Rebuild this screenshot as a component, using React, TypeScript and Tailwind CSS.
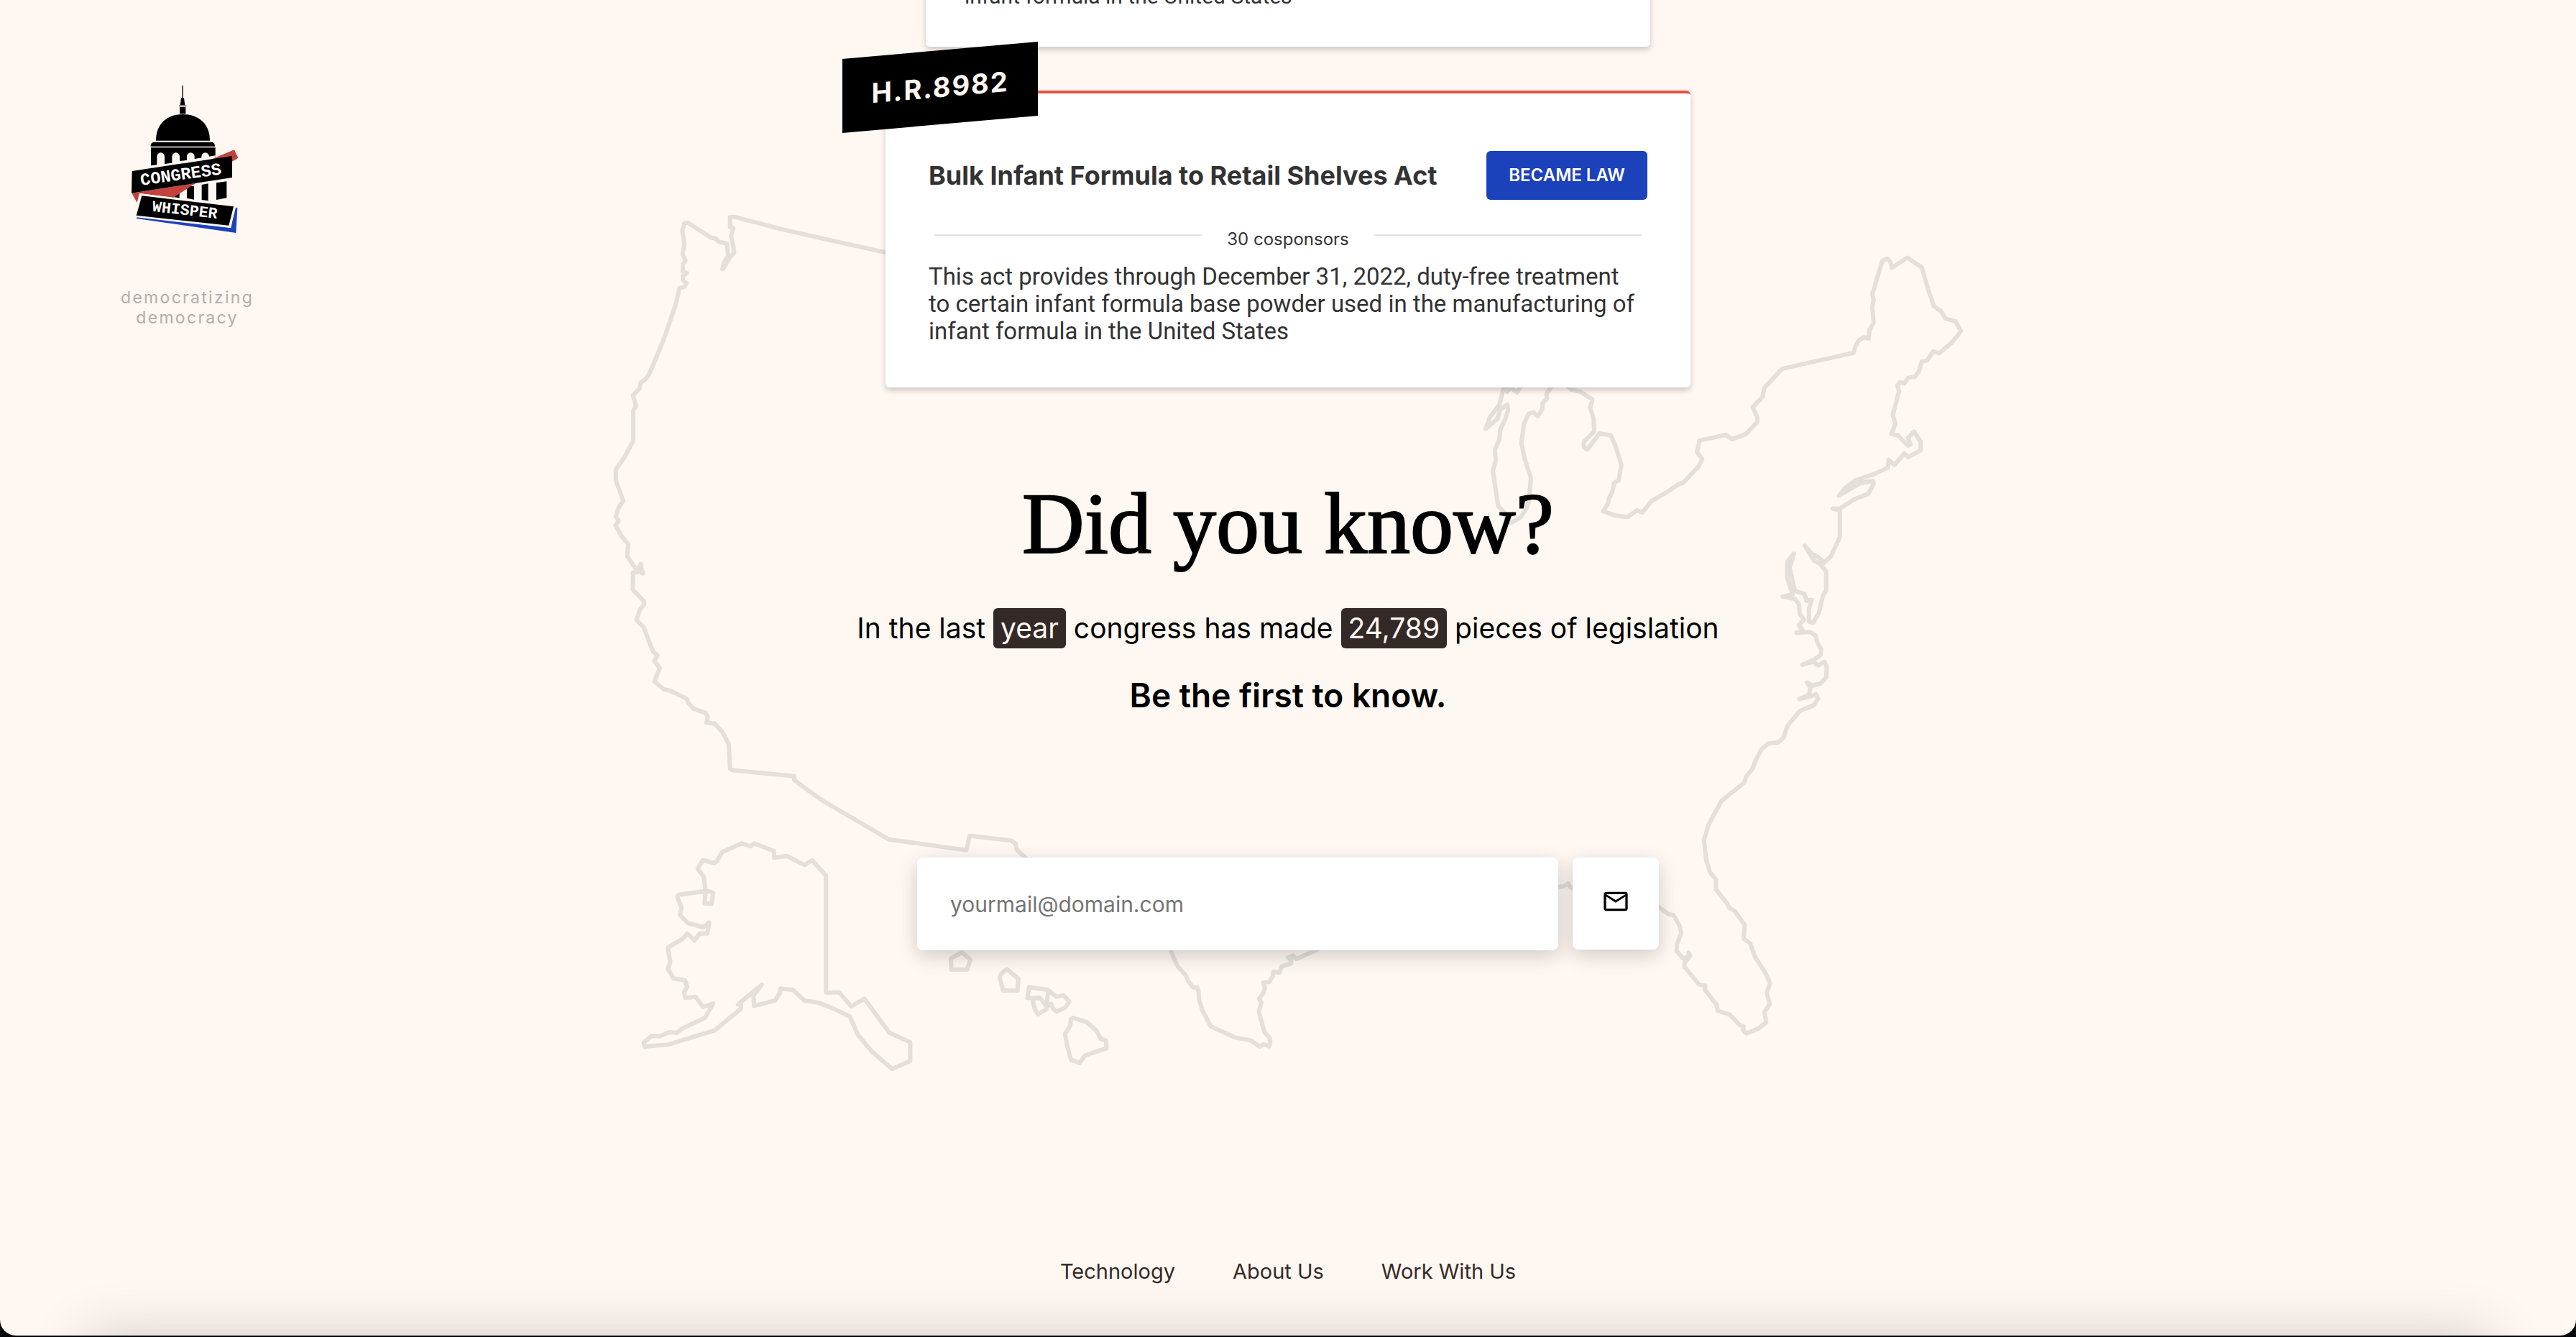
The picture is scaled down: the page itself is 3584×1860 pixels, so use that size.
import React from "react";
import { MdOutlineEmail } from "react-icons/md";

function Logo() {
  return (
    <svg viewBox="120 80 462 630" className="h-[210px] w-[154px]" role="img" aria-label="Congress Whisper">
      <path d="M340 86h4v52h-4z" />
      <path d="M336 138h12l4 30h-20z" />
      <path d="M327 168h31v6h-31z" fill="#7a7672" />
      <path d="M330 176h25v28h-25z" />
      <path d="M231 316c0-72 48-110 112-110s113 38 113 110z" />
      <path d="M209 340c0-12 6-18 14-18h240c8 0 14 6 14 18z" />
      <path d="M210 345h269v45L210 420z" />
      <g fill="#fff7f1">
        <path d="M235 420v-38a16 16 0 0 1 32 0v38z" />
        <path d="M298 412v-30a16 16 0 0 1 32 0v30z" />
        <path d="M360 404v-22a16 16 0 0 1 32 0v22z" />
        <path d="M421 396v-14a16 16 0 0 1 32 0v14z" />
      </g>
      <path d="M209 421 300 409 330 402 479 378v30L209 440z" fill="#fff7f1" />
      <path d="M483 492l43-6v69l-43 8z" />
      <path d="M422 500l27-5v72l-27-4z" />
      <path d="M360 506h30v56l-30-6z" />
      <path d="M300 515h29v40l-29-4z" />
      <path d="M466 392l92-38 16 34-26 16z" fill="#c1433b" />
      <path d="M130 535l268-42-94 60-142-17-10 39z" fill="#c1433b" />
      <path d="M131 443 549 380v90L129 535z" />
      <path d="M150 636l392 44 22-84 7-1-6 106-415-60z" fill="#1c42bb" />
      <path d="M162 536 563 588 544 680 148 632z" fill="#fff7f1" />
      <path d="M172 546 555 591 535 670 149 628z" />
      <g fill="#fff" fontFamily="'Liberation Mono', monospace" fontWeight="700">
        <text x="169" y="503" fontSize="71" transform="rotate(-8 169 503)">CONGRESS</text>
        <text x="214" y="610" fontSize="65" transform="rotate(6.5 214 610)">WHISPER</text>
      </g>
    </svg>
  );
}

function UnitedStatesMap() {
  return (
    <svg
      viewBox="847 290 1890 1210"
      aria-hidden="true"
      className="absolute left-1/2 top-[290px] w-[1890px] -translate-x-1/2"
      fill="none"
      stroke="#e4dfda"
      strokeWidth="6"
      strokeLinejoin="round"
      strokeLinecap="round"
    >
      {/* Northern border, Pacific coast */}
      <g transform="matrix(0.35714 0 0 0.54846 830 280)">
        <path
          vectorEffect="non-scaling-stroke"
          d="M1140 132 940 103 715 70 540 40 520 40 520 65 533 68 524 88 532 112 536 130 520 142 495 170 490 172 497 155 512 138 508 108 475 102 462 94 445 92 355 54 342 56 334 75 342 108 335 135 347 150 336 160 336 178 352 182 336 190 336 200 350 208 342 217 322 221 318 235 308 262 262 350 225 408 205 438 190 452 172 460 168 474 142 492 153 518 143 532 143 608 135 617 110 648 75 680 75 708 104 760 85 778 75 800 86 811 74 822 95 847 123 870 119 900 150 930 165 930 172 920 180 944 168 940 142 942 141 985 185 1015 186 1022 170 1035 155 1062 183 1080 220 1142 237 1152 225 1165 246 1184 225 1218 262 1238 290 1242 352 1262 358 1273 378 1287 425 1298 433 1308 428 1322 460 1325 492 1348 515 1377 520 1440 530 1443 770 1458 770 1468 790 1478"
        />
      </g>
      {/* Mexican border, Alaska, Hawaii */}
      <g transform="matrix(0.45918 0 0 0.33333 860 1040)">
        <path vectorEffect="non-scaling-stroke" d="M549 152 620 222 820 383 1055 428 1065 368 1190 388 1205 402 1207 425 1250 480" />
        <path
          vectorEffect="non-scaling-stroke"
          d="M375 400 403 412 413 400 472 432 473 460 510 452 565 490 588 470 630 535 630 1022 670 1022 706 1080 746 1048 822 1190 885 1230 885 1308 830 1342 770 1270 727 1200 702 1122 650 1088 605 1064 565 1056 530 1012 492 1006 490 1025 475 1056 412 1078 410 1035 435 990 363 1072 373 1075 372 1090 293 1180 150 1240 80 1248 77 1232 102 1203 125 1205 155 1188 178 1190 193 1174 263 1128 288 1068 257 1082 235 1040 204 1045 200 1022 209 998 203 972 168 964 151 925 158 893 150 835 194 800 210 776 232 805 247 776 270 776 276 730 258 750 211 732 187 698 192 668 179 622 184 614 270 598 288 606 283 652 262 650 265 598 260 540 241 505 257 470 290 482 300 474 315 436Z"
        />
        <path vectorEffect="non-scaling-stroke" d="M1042 855 1067 885 1058 927 1010 927 1008 880Z" />
        <path vectorEffect="non-scaling-stroke" d="M1178 925 1213 965 1210 1014 1167 1014 1156 960 1160 945Z" />
        <path
          vectorEffect="non-scaling-stroke"
          d="M1245 1000 1303 1012 1328 1040 1350 1034 1367 1060 1355 1084 1328 1102 1318 1090 1312 1070 1298 1080 1298 1092 1272 1113 1262 1090 1257 1060 1262 1046 1240 1045ZM1262 1046 1278 1044 1298 1080 1303 1015"
        />
        <path
          vectorEffect="non-scaling-stroke"
          d="M1378 1128 1420 1146 1450 1183 1462 1215 1478 1222 1480 1255 1450 1268 1415 1285 1398 1316 1372 1303 1360 1240 1354 1195 1370 1160 1372 1132Z"
        />
      </g>
      {/* Texas and the Gulf */}
      <g transform="matrix(0.33333 0 0 0.33333 1600 1300)">
        <path
          vectorEffect="non-scaling-stroke"
          d="M85 60 102 105 115 132 150 172 158 192 178 220 198 222 203 240 204 268 218 315 254 384 355 430 420 442 458 468 475 458 497 467 502 450 500 432 478 408 454 322 465 285 455 268 470 250 480 225 473 200 498 198 512 175 515 155 540 160 550 133 588 122 590 105 575 97 597 88 612 102 650 85 700 62"
        />
      </g>
      <path d="M2160 1235 2175 1233 2182 1229 2184 1234 2192 1237" />
      {/* Great Lakes and the North-east */}
      <g transform="matrix(0.48469 0 0 0.35714 2000 320)">
        <path
          vectorEffect="non-scaling-stroke"
          d="M192 605 178 680 150 730 138 775 172 735 180 700 200 680 203 700 195 735 180 778 178 815 165 855 167 900 159 938 174 1075 192 1100 198 1128 212 1140 238 1120 255 1085 262 1060 268 965 250 890 241 830 248 755 262 715 275 710 288 725 300 700 302 675 315 655 312 640 330 605"
        />
        <path vectorEffect="non-scaling-stroke" d="M192 605 200 630 210 615 228 632 242 605" />
        <path
          vectorEffect="non-scaling-stroke"
          d="M370 605 385 622 410 630 445 660 438 690 448 735 450 785 420 825 420 845 430 855 465 792 498 800 512 845 528 915 520 975 507 985 502 1020 492 1045 490 1065 475 1095 510 1112 545 1118 573 1092 588 1100 615 1055 660 1020 692 990 705 985 750 920 760 893 745 865 752 820 828 798 845 815 885 795 918 748 918 730 905 690 933 650 938 615 990 540 1195 478 1198 458 1210 428 1225 418 1238 422 1240 390 1252 360 1248 300 1252 270 1248 250 1277 120 1292 112 1300 125 1304 148 1348 108 1390 145 1408 230 1425 297 1445 315 1458 345 1487 355 1502 393 1495 408 1475 440 1440 480 1423 473 1405 508 1390 512 1382 550 1370 572 1352 575 1340 598 1328 592 1320 605 1325 628 1307 720 1314 755 1303 795 1322 800 1350 840 1358 835 1350 810 1368 785 1387 825 1387 858 1350 885 1340 870 1312 915 1295 895 1293 925 1255 950 1200 975 1170 1005 1152 1035 1215 985 1250 978 1252 990 1236 1028 1195 1050 1155 1085 1135 1085 1155 1092 1155 1195 1130 1270 1110 1295"
        />
      </g>
      {/* Atlantic coast and Florida */}
      <g transform="matrix(0.33333 0 0 0.48469 2300 700)">
        <path
          vectorEffect="non-scaling-stroke"
          d="M714 170 690 155 662 145 633 122 672 165 692 172 722 195 722 250 708 268 692 315 668 343 650 340 650 305 662 277 640 280 632 260 592 252 570 185 588 145 560 168 560 215 582 262 540 268 592 275 608 290 612 318 630 335 608 350 625 365 598 372 655 370 678 380 685 398 702 422 698 437 670 450 622 464 668 455 688 466 715 455 725 470 722 500 700 517 668 523 642 515 657 530 650 550 610 562 655 555 680 548 688 562 670 580 612 597 560 640 545 672 520 687 480 690 452 707 428 738 415 762 390 783 380 802 285 855 232 922 212 967 222 1025 238 1060 262 1080 262 1108 310 1150 318 1162 340 1170 382 1210 378 1250 405 1263 425 1302 470 1350 488 1378 474 1405 487 1438 465 1460 472 1490 440 1508 388 1522 375 1512 378 1502 362 1498 320 1468 270 1457 265 1440 215 1395 218 1385 192 1382 130 1330 130 1320 152 1302 148 1290 155 1300 125 1307 98 1285 100 1265 117 1235 112 1215 85 1182 65 1180 10 1152"
        />
      </g>
    </svg>
  );
}

function Chip({ children }: { children: React.ReactNode }) {
  return (
    <span className="inline-block h-14 rounded-md bg-[#332a27] px-[10px] leading-[56px] text-[#fff7f1]">{children}</span>
  );
}

function BillCard() {
  return (
    <article className="relative mt-[61px] w-[1120px] rounded-md border-t-4 border-[#e35144] bg-white px-[60px] pb-[59px] pt-20 text-[#333] shadow-[0_4px_8px_rgba(0,0,0,0.2)]">
      <div className="absolute -left-[60px] -top-[60px] flex h-[103px] w-[272px] -skew-y-[5deg] items-center justify-center bg-black text-[38px] font-bold tracking-wider text-[#fff7f1]">
        H.R.8982
      </div>
      <header className="flex h-[68px] items-center justify-between">
        <h2 className="whitespace-nowrap text-[36px] font-bold">Bulk Infant Formula to Retail Shelves Act</h2>
        <span className="flex h-[68px] w-[224px] items-center justify-center rounded-md bg-[#1c42bb] text-2xl font-semibold text-white">
          BECAME LAW
        </span>
      </header>
      <div className="mb-5 mt-[30px] flex h-[38px] items-center px-2">
        <span className="h-[2px] flex-1 bg-[#e2e2e2]" />
        <span className="w-[240px] pt-3 text-center text-2xl leading-7">30 cosponsors</span>
        <span className="h-[2px] flex-1 bg-[#e2e2e2]" />
      </div>
      <p className="font-['Roboto',sans-serif] text-[33px] leading-[38px]">
        This act provides through December 31, 2022, duty-free treatment
        <br />
        to certain infant formula base powder used in the manufacturing of
        <br />
        infant formula in the United States
      </p>
    </article>
  );
}

export default function App() {
  return (
    <div className="min-h-screen bg-[#05060c] pb-[2px] font-['Inter',sans-serif]">
      <div className="relative grid min-h-[calc(100vh-2px)] grid-cols-[1fr_auto_1fr] overflow-hidden rounded-b-[22px] bg-[#fff7f1]">
        <UnitedStatesMap />

        <aside className="relative flex flex-col items-start pl-[168px] pt-[117px]">
          <div className="flex flex-col items-center">
            <div className="pr-2">
              <Logo />
            </div>
            <p className="mt-[73px] text-center text-[23px] leading-7 tracking-widest text-[#b2aeab]">
              democratizing
              <br />
              democracy
            </p>
          </div>
        </aside>

        <main className="relative flex flex-col items-center">
          <article className="-mt-[22px] w-[1008px] rounded-md bg-white px-[54px] pb-[53px] font-['Roboto',sans-serif] text-[30px] leading-[34px] text-[#333] shadow-[0_4px_8px_rgba(0,0,0,0.2)]">
            infant formula in the United States
          </article>

          <BillCard />

          <h1 className="mt-[120px] font-['Liberation_Serif',serif] text-[120px] leading-[140px] text-black [-webkit-text-stroke:2px_black]">
            Did you know?
          </h1>
          <p className="mt-[47px] whitespace-nowrap text-[39px] leading-[56px] text-black">
            In the last <Chip>year</Chip> congress has made <Chip>24,789</Chip> pieces of legislation
          </p>
          <p className="mt-[35px] text-[46px] font-semibold leading-[60px] text-black">Be the first to know.</p>

          <form className="mt-[196px] flex items-start gap-5" onSubmit={(event) => event.preventDefault()}>
            <input
              type="email"
              aria-label="Email address"
              placeholder="yourmail@domain.com"
              className="h-[129px] w-[892px] rounded-lg bg-white px-[46px] text-[30px] text-[#333] shadow-[0_8px_28px_rgba(0,0,0,0.18)] placeholder:text-[#757575]"
            />
            <button
              type="submit"
              aria-label="Sign up"
              className="flex h-[128px] w-[120px] items-center justify-center rounded-lg bg-white pb-[6px] text-black shadow-[0_8px_28px_rgba(0,0,0,0.18)]"
            >
              <MdOutlineEmail className="size-10" />
            </button>
          </form>

          <nav className="mt-auto flex gap-20 pb-[69px] text-[29px] leading-10 text-[#332a27]">
            <a href="#technology">Technology</a>
            <a href="#about">About Us</a>
            <a href="#work">Work With Us</a>
          </nav>
        </main>

        <div className="pointer-events-none absolute -bottom-[100px] left-[120px] right-[120px] h-[100px] shadow-[0_0_80px_rgba(0,0,0,0.18)]" />
      </div>
    </div>
  );
}
